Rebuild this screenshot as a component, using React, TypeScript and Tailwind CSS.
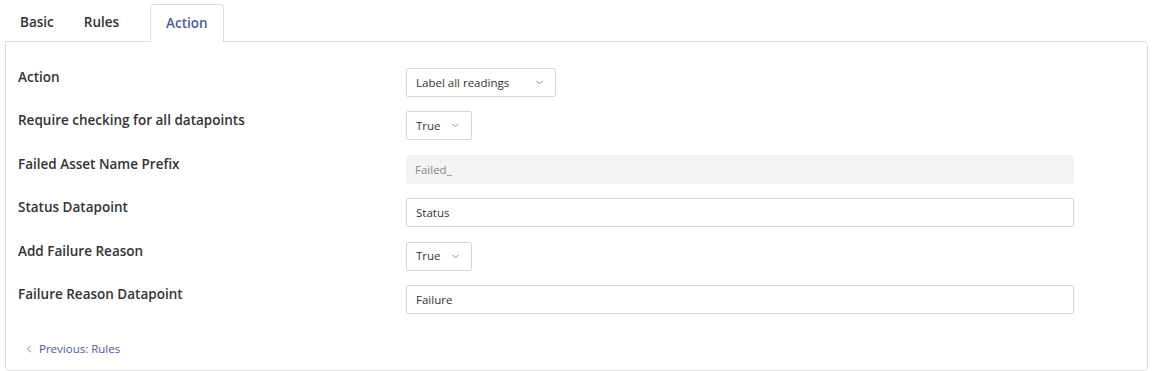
import { ChevronDown, ChevronLeft } from 'lucide-react';

const font = { fontFamily: '"Open Sans", "Noto Sans", sans-serif' };

function Select({ value, width }: { value: string; width: string }) {
  return (
    <div
      className={`flex items-center justify-between h-[29px] ${width} border border-[#d6d6d6] rounded-[2px] bg-white pl-[9px] pr-[10px] text-[11.5px] text-[#333]`}
    >
      <span>{value}</span>
      <ChevronDown className="w-[11px] h-[11px] text-[#888]" strokeWidth={2} />
    </div>
  );
}

function TextInput({ value, disabled }: { value: string; disabled?: boolean }) {
  return (
    <div
      className={`flex items-center h-[29px] w-[668px] rounded-[2px] pl-[9px] text-[11.5px] ${
        disabled ? 'bg-[#f3f3f3] text-[#888]' : 'bg-white border border-[#d6d6d6] text-[#333]'
      }`}
    >
      {value}
    </div>
  );
}

export default function App() {
  const rows: { label: string; field: React.ReactNode }[] = [
    { label: 'Action', field: <Select value="Label all readings" width="w-[150px]" /> },
    { label: 'Require checking for all datapoints', field: <Select value="True" width="w-[66px]" /> },
    { label: 'Failed Asset Name Prefix', field: <TextInput value="Failed_" disabled /> },
    { label: 'Status Datapoint', field: <TextInput value="Status" /> },
    { label: 'Add Failure Reason', field: <Select value="True" width="w-[66px]" /> },
    { label: 'Failure Reason Datapoint', field: <TextInput value="Failure" /> },
  ];

  return (
    <div className="w-[1155px] h-[371px] bg-white pt-[3px] pl-[5px]" style={font}>
      {/* Tabs */}
      <div className="flex items-end h-[38px] text-[13.5px] font-semibold">
        <div className="pl-[15px] pr-[15px] h-[38px] flex items-center text-[#333]">Basic</div>
        <div className="pl-[15px] pr-[15px] h-[38px] flex items-center text-[#333]">Rules</div>
        <div className="ml-[16px] px-[15px] h-[38px] flex items-center border border-b-0 border-[#dcdcdc] rounded-t-[4px] bg-white text-[#4d5aa8] relative -mb-px z-10">
          Action
        </div>
      </div>

      {/* Panel */}
      <div className="w-[1143px] h-[330px] border border-[#dcdcdc] rounded-b-[4px] rounded-tr-[4px] pl-[12px] pt-[26px]">
        <div className="flex flex-col gap-y-[14.4px]">
          {rows.map((r) => (
            <div key={r.label} className="flex items-start h-[29px]">
              <div className="w-[388px] text-[13.5px] font-semibold text-[#333] leading-[18px]">
                {r.label}
              </div>
              {r.field}
            </div>
          ))}
        </div>
        <div className="mt-[26px] ml-[5px] flex items-center gap-[4px] text-[11.5px] text-[#4d5aa8]">
          <ChevronLeft className="w-[12px] h-[12px]" strokeWidth={1.5} />
          <span>Previous: Rules</span>
        </div>
      </div>
    </div>
  );
}
